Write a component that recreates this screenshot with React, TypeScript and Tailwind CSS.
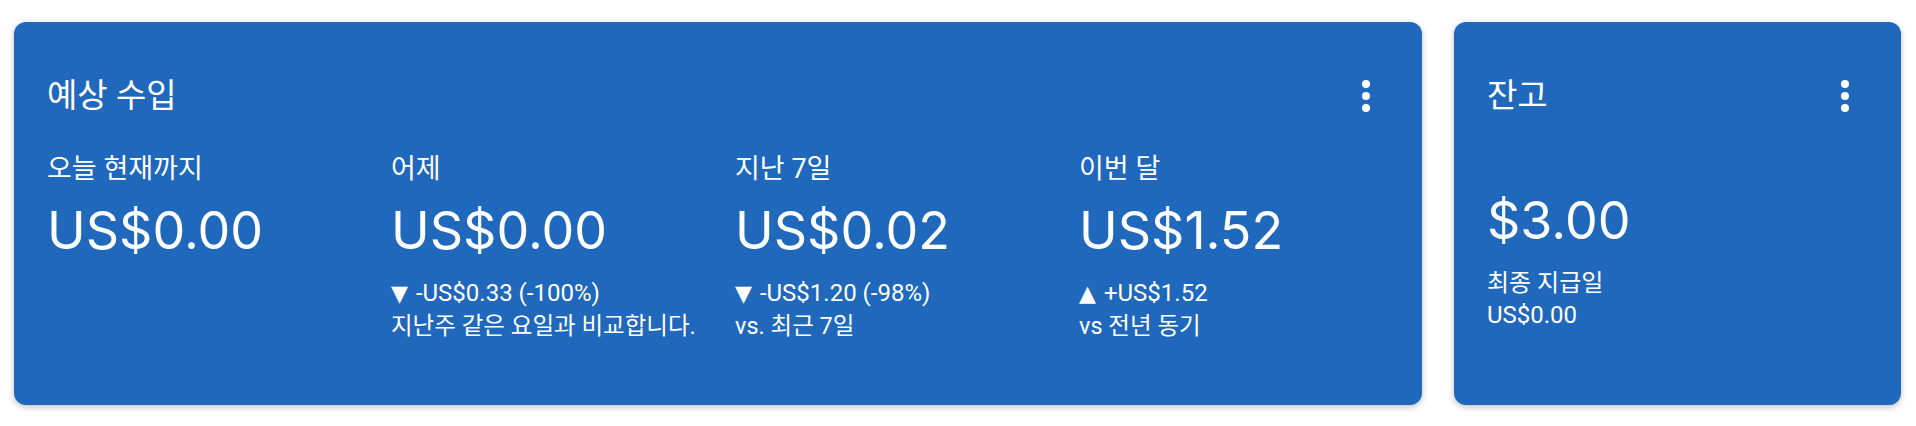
const MoreVert = () => (
  <svg viewBox="0 0 24 24" className="size-12 fill-white">
    <circle cx="12" cy="6" r="2" />
    <circle cx="12" cy="12" r="2" />
    <circle cx="12" cy="18" r="2" />
  </svg>
);

const body = "font-['Roboto','Noto_Sans_CJK_KR',sans-serif]";
const big = "font-['Inter','Noto_Sans_CJK_KR',sans-serif]";

type Stat = {
  label: string;
  value: string;
  arrow?: string;
  delta?: string;
  note?: string;
};

const stats: Stat[] = [
  { label: "오늘 현재까지", value: "US$0.00" },
  {
    label: "어제",
    value: "US$0.00",
    arrow: "▼",
    delta: "-US$0.33 (-100%)",
    note: "지난주 같은 요일과 비교합니다.",
  },
  {
    label: "지난 7일",
    value: "US$0.02",
    arrow: "▼",
    delta: "-US$1.20 (-98%)",
    note: "vs. 최근 7일",
  },
  {
    label: "이번 달",
    value: "US$1.52",
    arrow: "▲",
    delta: "+US$1.52",
    note: "vs 전년 동기",
  },
];

const CardHeader = ({ title }: { title: string }) => (
  <div className="flex h-12 items-center justify-between">
    <div className={`${body} text-[33px] leading-10 text-white`}>{title}</div>
    <button className="flex size-12 items-center justify-center">
      <MoreVert />
    </button>
  </div>
);

const App = () => {
  return (
    <div className="flex h-[426px] w-[1916px] gap-8 bg-white px-[14px] pt-[22px]">
      <div className="h-[383px] w-[1408px] shrink-0 rounded-xl bg-[#1f68bc] pt-[50px] pl-[33px] pr-8 shadow-[0_2px_6px_rgba(0,0,0,0.25)]">
        <CardHeader title="예상 수입" />
        <div className="mt-[33px] flex">
          {stats.map((s) => (
            <div key={s.label} className="w-[344px] shrink-0 text-white">
              <div className={`${body} text-[27px] leading-8`}>{s.label}</div>
              <div className={`${big} mt-[14px] text-[52px] leading-[64px]`}>
                {s.value}
              </div>
              {s.delta && (
                <div className={`${body} mt-[14px] text-[24px] leading-8`}>
                  <div>
                    <span className="mr-[8px] font-['DejaVu_Sans'] text-[22px]">
                      {s.arrow}
                    </span>
                    {s.delta}
                  </div>
                  <div className="text-[23.5px]">{s.note}</div>
                </div>
              )}
            </div>
          ))}
        </div>
      </div>

      <div className="h-[383px] w-[447px] shrink-0 rounded-xl bg-[#1f68bc] pt-[50px] pl-[33px] pr-8 text-white shadow-[0_2px_6px_rgba(0,0,0,0.25)]">
        <CardHeader title="잔고" />
        <div className={`${big} mt-[69px] text-[52px] leading-[64px]`}>
          $3.00
        </div>
        <div className={`${body} mt-[14px] text-[24px] leading-8`}>
          <div>최종 지급일</div>
          <div>US$0.00</div>
        </div>
      </div>
    </div>
  );
};

export default App;
